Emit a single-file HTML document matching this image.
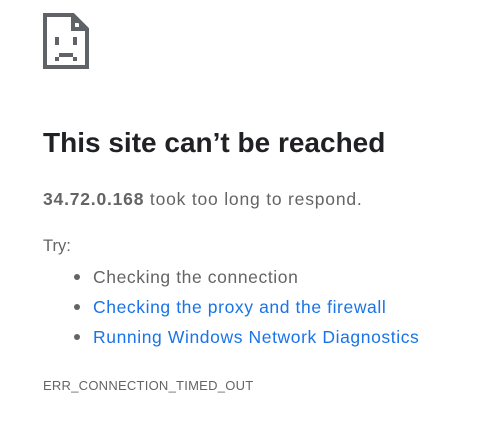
<!DOCTYPE html>
<html><head><style>
body{margin:0;background:#fff;font-family:"Liberation Sans",sans-serif;color:#646464;}
.icon{position:absolute;left:43px;top:13px}
h1{position:absolute;left:43px;top:127px;margin:0;font-size:28px;font-weight:bold;color:#202124;white-space:nowrap}
.p{position:absolute;left:43px;font-size:17.5px;letter-spacing:0.6px;white-space:nowrap}
.li{position:absolute;left:93px;font-size:17.5px;letter-spacing:0.6px;white-space:nowrap}
.dot{position:absolute;left:74px;width:6px;height:6px;border-radius:50%;background:#646464}
a{color:#1a73e8;text-decoration:none}
</style></head><body>
<svg class="icon" width="46" height="56" viewBox="0 0 46 56">
<path d="M2 2 H30 L44 16 V54 H2 Z" fill="none" stroke="#5f6368" stroke-width="4"/>
<rect x="28" y="2" width="4" height="14" fill="#5f6368"/>
<rect x="28" y="14" width="16" height="4" fill="#5f6368"/>
<rect x="32" y="6" width="4" height="4" fill="#5f6368"/>
<rect x="36" y="10" width="4" height="4" fill="#5f6368"/>
<rect x="12" y="24" width="4" height="8" fill="#5f6368"/>
<rect x="30" y="24" width="4" height="8" fill="#5f6368"/>
<rect x="16" y="40" width="14" height="4" fill="#5f6368"/>
<rect x="12" y="44" width="4" height="4" fill="#5f6368"/>
<rect x="30" y="44" width="4" height="4" fill="#5f6368"/>
</svg>
<h1>This site can’t be reached</h1>
<div class="p" style="top:189px;letter-spacing:0.8px"><b>34.72.0.168</b> took too long to respond.</div>
<div class="p" style="top:237px;font-size:16.5px;letter-spacing:0">Try:</div>
<div class="dot" style="top:274px"></div><div class="li" style="top:267px">Checking the connection</div>
<div class="dot" style="top:304px"></div><div class="li" style="top:297px"><a>Checking the proxy and the firewall</a></div>
<div class="dot" style="top:334px"></div><div class="li" style="top:327px"><a>Running Windows Network Diagnostics</a></div>
<div class="p" style="top:378px;font-size:13px;letter-spacing:0.25px">ERR_CONNECTION_TIMED_OUT</div>
</body></html>
